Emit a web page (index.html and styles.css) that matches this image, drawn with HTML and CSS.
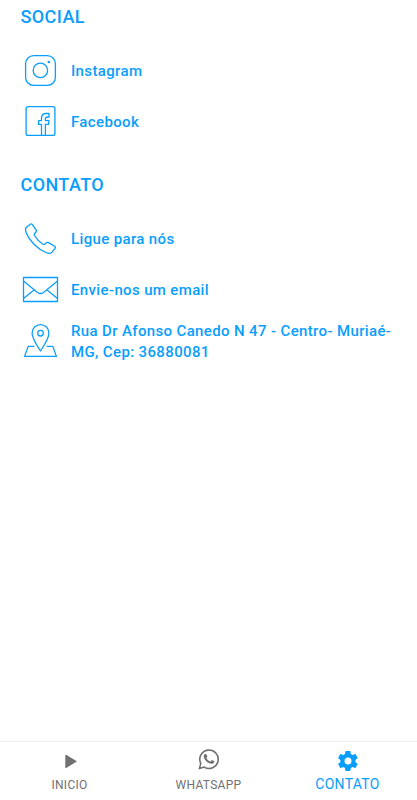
FILE: index.html
```html
<!DOCTYPE html>
<html lang="pt-BR">
<head>
    <meta charset="UTF-8">
    <meta name="viewport" content="width=device-width, initial-scale=1.0">
    <title>Contato</title>
    <link rel="stylesheet" href="styles.css">
</head>
<body>
    <main class="content">
        <section class="group">
            <h2>SOCIAL</h2>
            <a class="item" href="#">
                <svg class="item-icon" viewBox="0 0 40 40">
                    <rect x="5.6" y="4.6" width="29.8" height="29.8" rx="8"/>
                    <circle cx="20.4" cy="19.4" r="7.2"/>
                    <circle class="dot" cx="28.8" cy="11" r="1.3"/>
                </svg>
                <span>Instagram</span>
            </a>
            <a class="item" href="#">
                <svg class="item-icon" viewBox="0 0 40 40">
                    <rect x="6.1" y="4.6" width="28.8" height="28.8" rx="2"/>
                    <path d="M21.5 33.4V22.4H18.6V18.6H21.5V16.5C21.5 13 23.3 11.5 26 11.5H29V15H27.3C25.8 15 25.4 15.8 25.4 17V18.6H29L28.5 22.4H25.4V33.4"/>
                </svg>
                <span>Facebook</span>
            </a>
        </section>

        <section class="group">
            <h2>CONTATO</h2>
            <a class="item" href="#">
                <svg class="item-icon" viewBox="0 0 40 40">
                    <path d="M6.2 8.5L10.3 5.2Q11.5 4.4 12.4 5.6L16.2 11.2Q16.8 12.2 16 13L14.6 14.5Q14 15.4 14.5 16.5C16.4 19.8 19.7 23 23 25.2Q24 25.8 25 25L26.6 23.6Q27.5 23 28.5 23.6L34.7 27.3Q35.9 28.1 35.1 29.3L32 33.2C31 34.7 28.6 34.5 26 33.5C17.5 30.2 9 21.5 6.2 13.8C5.3 11.4 5.2 9.6 6.2 8.5Z"/>
                </svg>
                <span>Ligue para nós</span>
            </a>
            <a class="item" href="#">
                <svg class="item-icon" viewBox="0 0 40 40">
                    <rect x="3.5" y="7.5" width="34" height="24"/>
                    <path d="M3.5 11L17.5 22.4Q20.5 24.6 23.5 22.4L37.5 11M3.5 28.5L14 20M37.5 28.5L27 20"/>
                </svg>
                <span>Envie-nos um email</span>
            </a>
            <a class="item" href="#">
                <svg class="item-icon" viewBox="0 0 40 40">
                    <path d="M20.5 31C17 25.5 12.1 18.5 12.1 13.2C12.1 8.3 15.8 4.6 20.5 4.6S28.9 8.3 28.9 13.2C28.9 18.5 24 25.5 20.5 31Z"/>
                    <circle cx="20.5" cy="13.2" r="2.8"/>
                    <path d="M14.4 26.4H8.2L4.6 36.4H36.4L32.8 26.4H26.6"/>
                </svg>
                <span class="address">Rua Dr Afonso Canedo N 47 - Centro- Muriaé-MG, Cep: 36880081</span>
            </a>
        </section>
    </main>

    <nav class="tab-bar">
        <a class="tab" href="#">
            <svg class="tab-icon" viewBox="0 0 24 24">
                <path class="fill" d="M7.3 6.6Q7.3 5.2 8.6 6L18 11.8Q19 12.4 18 13L8.6 18.8Q7.3 19.6 7.3 18.2Z"/>
            </svg>
            <span>INICIO</span>
        </a>
        <a class="tab" href="#">
            <svg class="tab-icon" viewBox="0 0 24 24">
                <path class="line" d="M2.4 19.6L3.8 14.4A9.2 9.2 0 1 1 7.2 18.1Z"/>
                <path class="fill" d="M8.2 4.9H8.9Q9.3 4.9 9.5 5.4L10.3 7.3Q10.4 7.7 10.1 8.1L9.4 8.9C10.4 10.7 11.6 11.7 13.5 12.5L14.5 11.3Q14.8 11 15.2 11.2L17.1 12.1Q17.4 12.3 17.3 12.7C17.1 14.2 15.6 14.9 14.4 14.8C10.7 14.4 6.8 10.4 6.7 7.4C6.7 6.3 7.4 4.9 8.2 4.9Z"/>
            </svg>
            <span>WHATSAPP</span>
        </a>
        <a class="tab active" href="#">
            <svg class="tab-icon" viewBox="0 0 24 24">
                <path class="fill" d="M19.4 13c0-.3.1-.6.1-1s0-.7-.1-1l2.1-1.7c.2-.2.2-.4.1-.6l-2-3.5c-.1-.2-.4-.3-.6-.2l-2.5 1c-.5-.4-1.1-.7-1.7-1l-.4-2.6c0-.2-.2-.4-.5-.4h-4c-.2 0-.4.2-.5.4l-.4 2.6c-.6.3-1.2.6-1.7 1l-2.5-1c-.2-.1-.5 0-.6.2l-2 3.5c-.1.2-.1.5.1.6l2.1 1.7c0 .3-.1.6-.1 1s0 .7.1 1l-2.1 1.7c-.2.2-.2.4-.1.6l2 3.5c.1.2.4.3.6.2l2.5-1c.5.4 1.1.7 1.7 1l.4 2.6c0 .2.2.4.5.4h4c.2 0 .4-.2.5-.4l.4-2.6c.6-.3 1.2-.6 1.7-1l2.5 1c.2.1.5 0 .6-.2l2-3.5c.1-.2.1-.5-.1-.6zM12 15.5a3.5 3.5 0 1 1 0-7 3.5 3.5 0 0 1 0 7z"/>
            </svg>
            <span>CONTATO</span>
        </a>
    </nav>
</body>
</html>
```
FILE: styles.css
```css
:root {
    --primary-color: #0a9efc;
    --muted-color: #717171;
}

* {
    box-sizing: border-box;
}

body {
    margin: 0;
    height: 100vh;
    display: flex;
    flex-direction: column;
    overflow: hidden;
    background: #fff;
    color: var(--primary-color);
    font-family: Roboto, sans-serif;
}

a {
    color: inherit;
    text-decoration: none;
}

.content {
    flex: 1;
    padding: 6px 16px 0 20px;
}

.group {
    margin-bottom: 27px;
}

h2 {
    margin: 0 0 18px;
    padding-left: 0.5px;
    font-size: 18px;
    line-height: 22px;
    font-weight: 500;
    letter-spacing: 0.4px;
}

.item {
    display: flex;
    align-items: center;
    min-height: 50px;
    margin-bottom: 1px;
    font-size: 15px;
    line-height: 21px;
    font-weight: 500;
    letter-spacing: 0.36px;
}

.item:nth-of-type(2) {
    margin-bottom: 0;
}

.item-icon {
    flex: none;
    width: 40px;
    height: 40px;
    margin-right: 11px;
    fill: none;
    stroke: var(--primary-color);
    stroke-width: 1.3;
    stroke-linejoin: round;
}

.item-icon .dot {
    fill: var(--primary-color);
    stroke: none;
}

.address {
    padding-top: 4px;
}

.tab-bar {
    display: flex;
    height: 59px;
    border-top: 1px solid #efefef;
}

.tab {
    flex: 1;
    display: flex;
    flex-direction: column;
    align-items: center;
    padding-top: 7px;
    color: var(--muted-color);
    font-size: 12px;
    line-height: 16px;
    letter-spacing: 0.3px;
}

.tab-icon {
    width: 24px;
    height: 24px;
    margin-bottom: 4px;
}

.tab-icon .fill {
    fill: currentColor;
}

.tab-icon .line {
    fill: none;
    stroke: currentColor;
    stroke-width: 1.6;
    stroke-linejoin: round;
}

.tab.active {
    color: var(--primary-color);
    font-size: 14px;
}

.tab.active .tab-icon {
    margin-bottom: 3px;
}
```
